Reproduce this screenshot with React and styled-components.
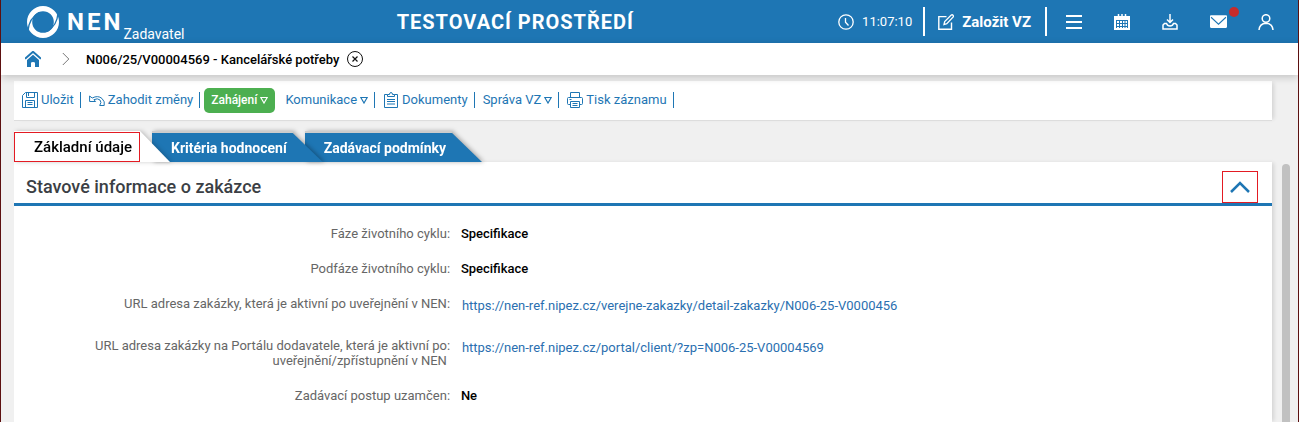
import React, { useState } from "react";
import styled, { createGlobalStyle } from "styled-components";

const BLUE = "#1e76b4";

const details = [
  { label: "Fáze životního cyklu", value: "Specifikace" },
  { label: "Podfáze životního cyklu", value: "Specifikace" },
  {
    label: "URL adresa zakázky, která je aktivní po uveřejnění v NEN",
    url: "https://nen-ref.nipez.cz/verejne-zakazky/detail-zakazky/N006-25-V0000456",
  },
  {
    label: "URL adresa zakázky na Portálu dodavatele, která je aktivní po uveřejnění/zpřístupnění v NEN",
    url: "https://nen-ref.nipez.cz/portal/client/?zp=N006-25-V00004569",
  },
  { label: "Zadávací postup uzamčen", value: "Ne" },
];

const tabs = ["Základní údaje", "Kritéria hodnocení", "Zadávací podmínky"];

const Icon = ({ size = 16, children }) => (
  <svg
    width={size}
    height={size}
    viewBox="0 0 16 16"
    fill="none"
    stroke="currentColor"
    strokeWidth="1"
    aria-hidden="true"
  >
    {children}
  </svg>
);

const LogoMark = () => (
  <svg width="32" height="32" viewBox="0 0 32 32" fill="none" aria-hidden="true">
    <circle cx="16" cy="16" r="13.400" stroke="#fff" strokeWidth="5.200" />
    <path d="M1 25C1.500 17 5 10.500 12 6.500" stroke={BLUE} strokeWidth="1.300" />
    <path d="M31 7C30.500 15 27 21.500 20 25.500" stroke={BLUE} strokeWidth="1.300" />
  </svg>
);

const ClockIcon = () => (
  <Icon>
    <circle cx="8" cy="8" r="7.200" strokeWidth="1.300" />
    <path d="M7.500 4v4.200l3 3.300" strokeWidth="1.300" />
  </Icon>
);

const EditIcon = () => (
  <Icon>
    <path d="M8.500 2.600H.8v12.700h12.700V8.500" strokeWidth="1.400" />
    <path d="M6 10.500l.7-3L13 1.200q1.200-.9 2 0t0 2L8.800 9.700z" strokeWidth="1.300" />
  </Icon>
);

const MenuIcon = () => (
  <Icon>
    <path d="M0 2h16M0 8h16M0 14h16" strokeWidth="2" />
  </Icon>
);

const CalendarIcon = () => (
  <Icon>
    <path d="M0 2h16v14H0z" fill="currentColor" stroke="none" />
    <path d="M4.500 0v3M8 0v3M11.500 0v3" strokeWidth="1.500" />
    <path d="M2 6.500h12M2.500 9.500h11M2.500 12.500h11M2.500 6v8M5.500 6v8M8.500 6v8M11 6v8M13.500 6v8" stroke={BLUE} />
  </Icon>
);

const InboxIcon = () => (
  <Icon>
    <path d="M8 0v8M5 5.500l3 3 3-3" strokeWidth="1.500" />
    <path d="M1 15h14v-4l-1.500-1.500h-2q-.8 2.500-3.500 2.500T4.500 9.500h-2L1 11z" strokeWidth="1.500" />
  </Icon>
);

const MailIcon = () => (
  <Icon size={17}>
    <rect x="0" y="2" width="16" height="12" rx="1" fill="currentColor" stroke="none" />
    <path d="M1 4l7 6.500L15 4" stroke={BLUE} />
  </Icon>
);

const UserIcon = () => (
  <Icon>
    <circle cx="8" cy="4.500" r="3.800" strokeWidth="1.500" />
    <path d="M1 16q.5-6.500 7-6.800 6.500.3 7 6.800" strokeWidth="1.500" />
  </Icon>
);

const HomeIcon = () => (
  <Icon>
    <path d="M0 7.800L8 .8l8 7" strokeWidth="2" />
    <path d="M2 9l6-5.300L14 9v7h-4v-4q0-1-2-1t-2 1v4H2z" fill="currentColor" stroke="none" />
  </Icon>
);

const SaveIcon = () => (
  <Icon>
    <path d="M3.500.5h12v15H.5v-12z" />
    <path d="M4.500.5v5h8v-5M6.500 1v3M3.500 15.500V8.500h9v7M5.500 10.500h5M5.500 12.500h5" />
  </Icon>
);

const UndoIcon = () => (
  <Icon>
    <path d="M.6 4v5.500h6L4.900 7.700Q8.500 5.800 11 8q2 2.300-.3 5.500h4.500Q16.300 9.500 13 6.500 9 3 3.200 6z" />
  </Icon>
);

const ClipboardIcon = () => (
  <Icon>
    <path d="M4.500 2.500h-3v13h13v-13h-3" />
    <path d="M4.500 4.500v-2h2Q6.500.5 8 .5t1.500 2h2v2zM4 7.500h8M4 9.500h8M4 12h8" />
  </Icon>
);

const PrinterIcon = () => (
  <Icon>
    <path d="M3.500 5V.5h9V5M3.500 12.500h-2q-1 0-1-1v-5q0-1 1-1h13q1 0 1 1v5q0 1-1 1h-2M3.500 9.500h9v6h-9zM5.500 11.500h5M5.500 13.500h5M2.500 7.500h2" />
  </Icon>
);

const DropArrow = () => (
  <svg width="8" height="8" viewBox="0 0 8 8" fill="none" stroke="currentColor" strokeWidth="1.200" aria-hidden="true">
    <path d="M.8 1.500h6.400L4 7z" />
  </svg>
);

const App = () => {
  const [activeTab, setActiveTab] = useState(0);
  const [open, setOpen] = useState(true);

  return (
    <Page>
      <GlobalStyle />
      <TopBar>
        <Brand>
          <LogoMark />
          <BrandName>NEN</BrandName>
          <BrandRole>Zadavatel</BrandRole>
        </Brand>
        <EnvTitle>TESTOVACÍ PROSTŘEDÍ</EnvTitle>
        <Clock>
          <ClockIcon />
          <time>11:07:10</time>
        </Clock>
        <CreateButton type="button">
          <EditIcon />
          Založit VZ
        </CreateButton>
        <IconNav>
          <IconButton type="button" aria-label="Menu"><MenuIcon /></IconButton>
          <IconButton type="button" aria-label="Kalendář"><CalendarIcon /></IconButton>
          <IconButton type="button" aria-label="Stažené soubory"><InboxIcon /></IconButton>
          <IconButton type="button" aria-label="Zprávy">
            <MailIcon />
            <UnreadDot />
          </IconButton>
          <IconButton type="button" aria-label="Uživatel"><UserIcon /></IconButton>
        </IconNav>
      </TopBar>

      <Breadcrumb aria-label="Navigace">
        <HomeLink href="#home" aria-label="Domů"><HomeIcon /></HomeLink>
        <svg width="8" height="14" viewBox="0 0 8 14" fill="none" stroke="#777" aria-hidden="true">
          <path d="M.8 1l6 6-6 6" />
        </svg>
        <Crumb>N006/25/V00004569 - Kancelářské potřeby</Crumb>
        <CloseButton type="button" aria-label="Zavřít">
          <Icon>
            <circle cx="8" cy="8" r="7.500" />
            <path d="M5.500 5.500l5 5M10.500 5.500l-5 5" strokeWidth="1.200" />
          </Icon>
        </CloseButton>
      </Breadcrumb>

      <Toolbar>
        <ToolButton type="button"><SaveIcon />Uložit</ToolButton>
        <ToolButton type="button"><UndoIcon />Zahodit změny</ToolButton>
        <StartButton type="button">Zahájení<DropArrow /></StartButton>
        <ToolButton type="button">Komunikace<DropArrow /></ToolButton>
        <ToolButton type="button"><ClipboardIcon />Dokumenty</ToolButton>
        <ToolButton type="button">Správa VZ<DropArrow /></ToolButton>
        <ToolButton type="button"><PrinterIcon />Tisk záznamu</ToolButton>
      </Toolbar>

      <Tabs role="tablist">
        {tabs.map((name, i) => (
          <Tab
            key={name}
            type="button"
            role="tab"
            aria-selected={activeTab === i}
            $active={activeTab === i}
            $order={tabs.length - i}
            onClick={() => setActiveTab(i)}
          >
            <TabLabel $active={activeTab === i}>{name}</TabLabel>
          </Tab>
        ))}
      </Tabs>

      <Content>
        <Panel>
          <SectionHeader>
            <h2>Stavové informace o zakázce</h2>
            <CollapseButton
              type="button"
              aria-label="Sbalit"
              aria-expanded={open}
              onClick={() => setOpen(!open)}
            >
              <svg width="20" height="12" viewBox="0 0 20 12" fill="none" stroke={BLUE} strokeWidth="2.500" aria-hidden="true">
                <path d="M1 11l9-9 9 9" />
              </svg>
            </CollapseButton>
          </SectionHeader>
          {open && (
            <DetailList>
              {details.map((row) => (
                <DetailRow key={row.label}>
                  <dt>{row.label}</dt>
                  <Colon>:</Colon>
                  {row.url ? (
                    <LinkValue><a href={row.url}>{row.url}</a></LinkValue>
                  ) : (
                    <Value>{row.value}</Value>
                  )}
                </DetailRow>
              ))}
            </DetailList>
          )}
        </Panel>
        <ScrollThumb />
      </Content>
    </Page>
  );
};

const GlobalStyle = createGlobalStyle`
  * { box-sizing: border-box; }
  body {
    margin: 0;
    background: #f0f0f0;
    font-family: Roboto, "Liberation Sans", sans-serif;
    font-size: 13px;
  }
  button {
    font: inherit;
    color: inherit;
    background: none;
    border: 0;
    padding: 0;
    cursor: pointer;
  }
  svg { display: block; flex-shrink: 0; }
`;

const Page = styled.div`
  display: flex;
  flex-direction: column;
  height: 100vh;
  overflow: hidden;
  border: solid #5c1010;
  border-width: 0 1px;
`;

const TopBar = styled.header`
  display: flex;
  align-items: center;
  flex-shrink: 0;
  height: 43px;
  padding: 0 8px 0 26px;
  background: ${BLUE};
  color: #fff;
`;

const Brand = styled.div`
  display: flex;
  align-items: center;
  height: 100%;
`;

const BrandName = styled.span`
  margin-left: 8px;
  font-size: 24px;
  font-weight: 700;
  letter-spacing: 3px;
`;

const BrandRole = styled.span`
  align-self: flex-end;
  line-height: 18px;
  font-size: 14px;
`;

const EnvTitle = styled.h1`
  flex: 1;
  margin: 0;
  padding-left: 8px;
  text-align: center;
  font-size: 20px;
  font-weight: 700;
  letter-spacing: 1px;
`;

const Clock = styled.div`
  display: flex;
  align-items: center;
  gap: 8px;
  padding-right: 11px;
  font-size: 13px;
`;

const CreateButton = styled.button`
  display: flex;
  align-items: center;
  gap: 8px;
  height: 29px;
  padding: 0 14px 0 13px;
  border: solid #fff;
  border-width: 0 2px;
  font-size: 15px;
  font-weight: 700;
`;

const IconNav = styled.nav`
  display: flex;
  margin-left: 3px;
`;

const IconButton = styled.button`
  position: relative;
  display: flex;
  align-items: center;
  justify-content: center;
  width: 48px;
  height: 43px;
`;

const UnreadDot = styled.span`
  position: absolute;
  top: 7px;
  right: 3px;
  width: 10px;
  height: 10px;
  border-radius: 50%;
  background: #c62c2c;
`;

const Breadcrumb = styled.nav`
  position: relative;
  z-index: 1;
  display: flex;
  align-items: center;
  flex-shrink: 0;
  height: 32px;
  padding-left: 24px;
  background: #fff;
  box-shadow: 0 2px 8px rgba(0, 0, 0, 0.2);
`;

const HomeLink = styled.a`
  margin-right: 21px;
  color: ${BLUE};
`;

const Crumb = styled.span`
  margin: 0 8px 0 16px;
  font-size: 13px;
  font-weight: 500;
`;

const CloseButton = styled.button`
  color: #111;
`;

const Toolbar = styled.div`
  display: flex;
  align-items: center;
  flex-shrink: 0;
  height: 40px;
  margin: 6px 26px 10px 13px;
  padding-bottom: 1px;
  background: #fff;
  border-bottom: 1px solid #ddd;
  box-shadow: 4px 0 4px -2px rgba(0, 0, 0, 0.12);
  color: ${BLUE};
`;

const ToolButton = styled.button`
  display: flex;
  align-items: center;
  gap: 3px;
  height: 16px;
  padding: 0 6px 0 8px;
  border-right: 1px solid ${BLUE};
  line-height: 16px;
`;

const StartButton = styled.button`
  display: flex;
  align-items: center;
  gap: 3px;
  height: 25px;
  margin: 0 2px 0 4px;
  padding: 0 7px;
  border-radius: 5px;
  background: #4caf50;
  color: #fff;
  font-size: 12px;
  font-weight: 500;
`;

const Tabs = styled.div`
  display: flex;
  align-items: flex-end;
  flex-shrink: 0;
  height: 31px;
  margin-left: 13px;
`;

const Tab = styled.button`
  position: relative;
  z-index: ${(p) => p.$order};
  height: ${(p) => (p.$active ? 31 : 29)}px;
  padding-right: ${(p) => (p.$active ? 30 : 36)}px;
  filter: drop-shadow(2px 0 2px rgba(0, 0, 0, ${(p) => (p.$active ? 0.2 : 0.3)}));
  color: ${(p) => (p.$active ? "#000" : "#fff")};
  font-size: ${(p) => (p.$active ? 15 : 14)}px;
  font-weight: ${(p) => (p.$active ? 500 : 700)};

  & + & { margin-left: -18px; }

  &::before {
    content: "";
    position: absolute;
    inset: 0;
    z-index: -1;
    background: ${(p) => (p.$active ? "#fff" : BLUE)};
    clip-path: polygon(0 0, calc(100% - 30px) 0, 100% 100%, 0 100%);
  }

  &::after {
    content: "";
    display: ${(p) => (p.$active ? "none" : "block")};
    position: absolute;
    top: -2px;
    left: 0;
    right: 30px;
    height: 2px;
    background: #ccc;
  }
`;

const TabLabel = styled.span`
  display: flex;
  align-items: center;
  height: ${(p) => (p.$active ? "30px" : "100%")};
  padding: ${(p) => (p.$active ? "0 7px 0 19px" : "0 0 0 19px")};
  border: ${(p) => (p.$active ? "1px solid #e31b23" : "0")};
`;

const Content = styled.main`
  display: flex;
  flex: 1;
  min-height: 0;
  gap: 10px;
  padding: 0 8px 0 13px;
`;

const Panel = styled.section`
  flex: 1;
  background: #fff;
  box-shadow: 3px 0 4px -1px rgba(0, 0, 0, 0.12);
`;

const ScrollThumb = styled.div`
  width: 8px;
  margin-top: 2px;
  border-radius: 4px 4px 0 0;
  background: #c1c1c1;
`;

const SectionHeader = styled.div`
  display: flex;
  align-items: flex-end;
  justify-content: space-between;
  height: 44px;
  padding: 0 14px 0 12px;
  border-bottom: 3px solid ${BLUE};

  h2 {
    margin: 0;
    line-height: 32px;
    font-size: 18px;
    font-weight: 500;
    color: #3b3f45;
  }
`;

const CollapseButton = styled.button`
  display: flex;
  align-items: center;
  justify-content: center;
  width: 36px;
  height: 32px;
  border: 1px solid #e31b23;
`;

const DetailList = styled.dl`
  display: flex;
  flex-direction: column;
  gap: 20px;
  margin: 0;
  padding: 20px 12px 20px 14px;
  line-height: 15px;
`;

const DetailRow = styled.div`
  display: grid;
  grid-template-columns: 34% 14px 1fr;

  dt {
    padding-left: 56px;
    text-align: right;
    color: #666;
  }
`;

const Colon = styled.span`
  color: #666;
`;

const Value = styled.dd`
  margin: 0;
  font-weight: 500;
  color: #000;
`;

const LinkValue = styled.dd`
  margin: 0;
  padding: 2px 0 5px 1px;

  a {
    color: #2a6fb0;
    text-decoration: none;
  }
`;

export default App;
